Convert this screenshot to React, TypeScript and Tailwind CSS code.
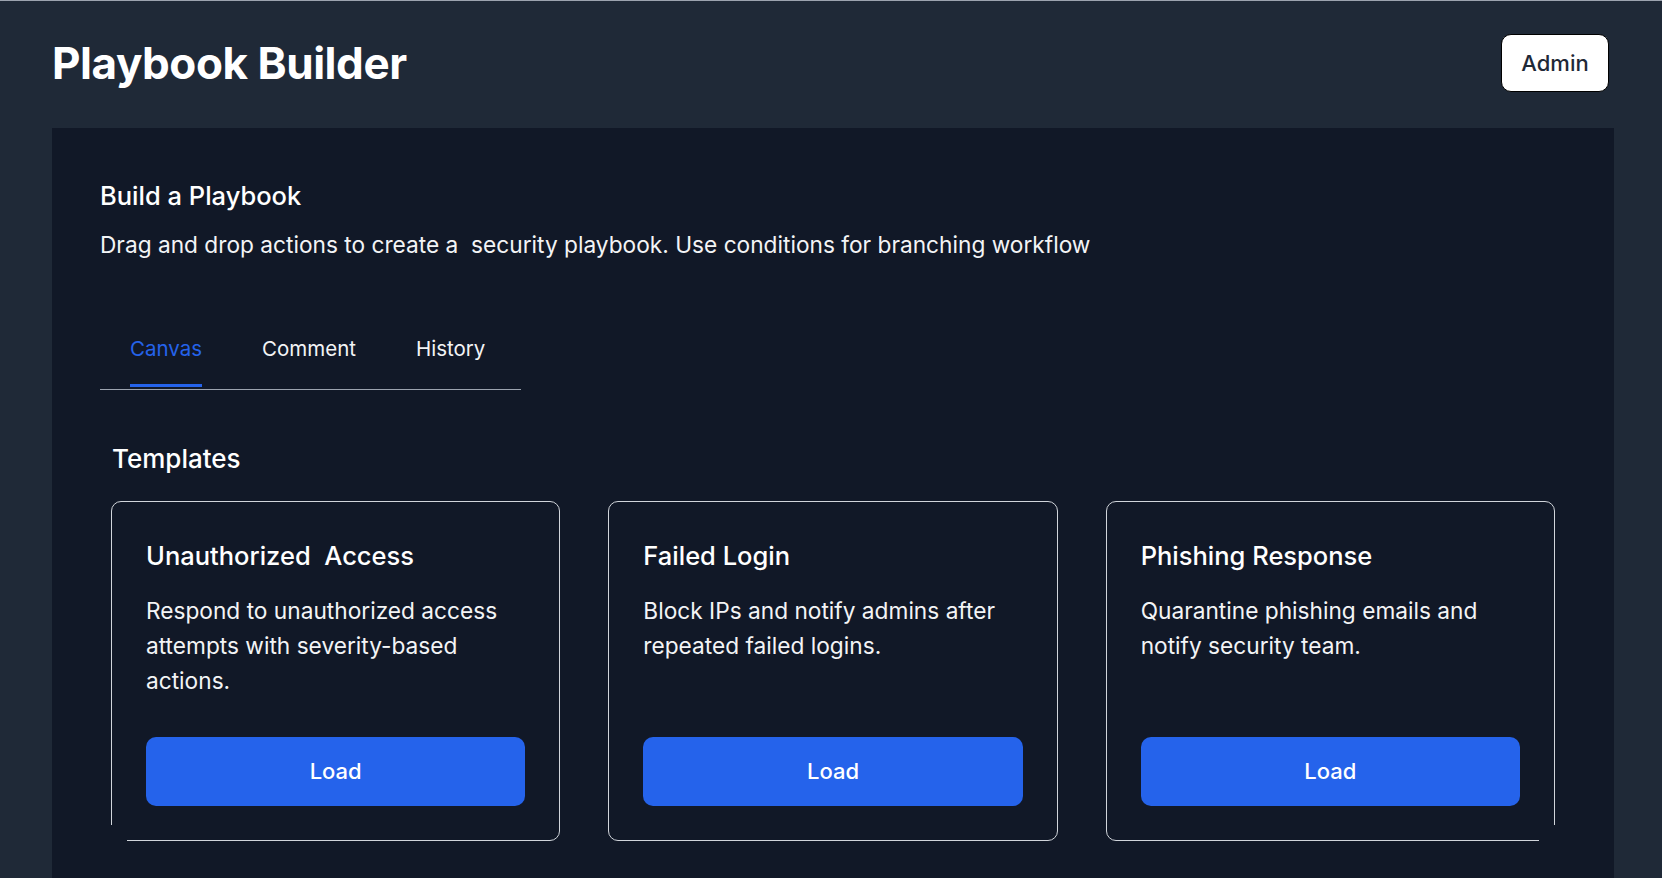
import React, { useState } from "react";

const templates = [
  {
    title: "Unauthorized  Access",
    desc: "Respond to unauthorized access attempts with severity-based actions.",
  },
  {
    title: "Failed Login",
    desc: "Block IPs and notify admins after repeated failed logins.",
  },
  {
    title: "Phishing Response",
    desc: "Quarantine phishing emails and notify security team.",
  },
];

const tabs = ["Canvas", "Comment", "History"];

export default function App() {
  const [active, setActive] = useState("Canvas");
  return (
    <div
      className="min-h-screen flex flex-col bg-[#1f2937] border-t border-[#9ca3af] pl-[52px] pr-[48px] text-white"
      style={{ fontFamily: "Inter, 'Noto Sans', sans-serif" }}
    >
      <header className="flex items-center justify-between pt-[33px] pb-[36px] pr-[5px]">
        <h1 className="text-[44px] font-bold leading-none tracking-[-0.01em]">Playbook Builder</h1>
        <button className="h-[58px] w-[108px] rounded-[10px] border-[1.5px] border-black bg-white text-[22px] font-medium text-[#1f2937]">
          Admin
        </button>
      </header>

      <main className="flex-1 bg-[#111827] px-12 pt-[52px] pb-12">
        <h2 className="text-[25.5px] font-medium leading-8">Build a Playbook</h2>
        <p className="mt-[19px] text-[22.7px] leading-7 text-gray-100 whitespace-pre">
          Drag and drop actions to create a  security playbook. Use conditions for branching workflow
        </p>

        <div className="mt-[76px] flex w-[421px] border-b border-[#9ca3af]">
          {tabs.map((t) => (
            <button
              key={t}
              onClick={() => setActive(t)}
              className="px-[30px] pb-[2px] text-[20.5px] leading-7"
            >
              <span
                className={
                  "block pb-[21px] border-b-[3px] " +
                  (active === t ? "border-[#2563eb] text-[#2563eb]" : "border-transparent text-gray-100")
                }
              >
                {t}
              </span>
            </button>
          ))}
        </div>

        <section className="px-[11px]">
          <h3 className="mt-[53px] text-[26px] font-medium leading-8 pl-px">Templates</h3>
          <div className="mt-[26px] grid grid-cols-3 gap-12">
            {templates.map((tpl, i) => (
              <div
                key={tpl.title}
                className="relative flex flex-col rounded-[10px] border border-[#d1d5db] px-[34px] pt-[38px] pb-[34px]"
              >
                <h4 className="text-[25.5px] font-medium leading-8 whitespace-pre">{tpl.title}</h4>
                <p className="mt-[21px] mb-[39px] text-[22.7px] leading-[35px] text-gray-100">{tpl.desc}</p>
                <button className="mt-auto h-[69px] w-full rounded-[10px] bg-[#2563eb] text-[22px] font-medium text-white">
                  Load
                </button>
                {i === 0 && (
                  <div className="absolute -left-px -bottom-px h-[16px] w-[16px] bg-[#111827]" />
                )}
                {i === 2 && (
                  <div className="absolute -right-px -bottom-px h-[16px] w-[16px] bg-[#111827]" />
                )}
              </div>
            ))}
          </div>
        </section>
      </main>
    </div>
  );
}
